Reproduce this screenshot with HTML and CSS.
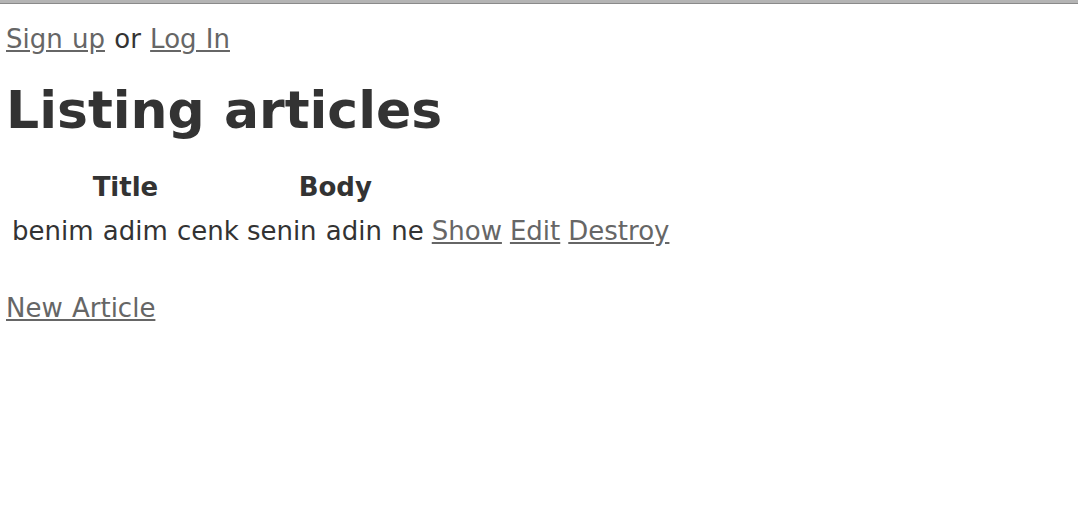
FILE: index.html
```html
<!DOCTYPE html>
<html>
<head>
<meta charset="utf-8">
<title>Articles</title>
<link rel="stylesheet" href="styles.css">
</head>
<body>
<div class="chrome"></div>
<div class="page">
  <p class="auth"><a href="#">Sign up</a> or <a href="#">Log In</a></p>
  <h1 class="title">Listing articles</h1>
  <table class="articles">
    <thead>
      <tr>
        <th>Title</th>
        <th>Body</th>
        <th colspan="3"></th>
      </tr>
    </thead>
    <tbody>
      <tr>
        <td>benim adim cenk</td>
        <td>senin adin ne</td>
        <td><a href="#">Show</a></td>
        <td><a href="#">Edit</a></td>
        <td><a href="#">Destroy</a></td>
      </tr>
    </tbody>
  </table>
  <br>
  <a href="#">New Article</a>
</div>
</body>
</html>
```

FILE: styles.css
```css
html, body {
  margin: 0;
  padding: 0;
  background: #fff;
}

body {
  color: #333;
  font-family: Verdana, "DejaVu Sans", sans-serif;
  font-size: 26px;
  line-height: 36px;
  word-spacing: 1px;
}

.chrome {
  height: 3px;
  background: #b4b4b4;
  border-bottom: 1px solid #8a8a8a;
}

.page {
  padding: 0 6px;
}

a {
  color: #666;
}

.auth {
  margin: 17px 0 0;
}

.title {
  font-size: 52px;
  line-height: 62px;
  font-weight: bold;
  margin: 22px 0 23px;
}

.articles {
  border-spacing: 2px;
  margin-left: 1px;
}

.articles th,
.articles td {
  padding: 1px 3px;
  line-height: 40px;
  font-size: 26px;
}

.articles th {
  font-weight: bold;
  text-align: center;
}
```
